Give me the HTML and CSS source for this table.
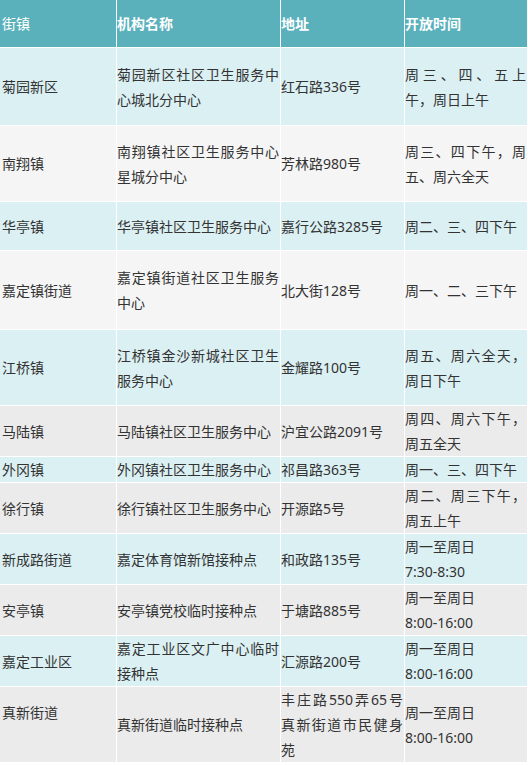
FILE: index.html
```html
<!DOCTYPE html>
<html lang="zh-CN">
<head>
<meta charset="utf-8">
<title>接种点</title>
<link rel="stylesheet" href="styles.css">
</head>
<body>
<table class="sites">
  <colgroup>
    <col class="c1"><col class="c2"><col class="c3"><col class="c4">
  </colgroup>
  <thead>
    <tr class="head">
      <th class="plain">街镇</th>
      <th>机构名称</th>
      <th>地址</th>
      <th>开放时间</th>
    </tr>
  </thead>
  <tbody>
    <tr class="blue h78">
      <td>菊园新区</td>
      <td>菊园新区社区卫生服务中心城北分中心</td>
      <td>红石路336号</td>
      <td>周三、四、五上午，周日上午</td>
    </tr>
    <tr class="light h76">
      <td>南翔镇</td>
      <td>南翔镇社区卫生服务中心星城分中心</td>
      <td>芳林路980号</td>
      <td>周三、四下午，周五、周六全天</td>
    </tr>
    <tr class="blue h49">
      <td>华亭镇</td>
      <td>华亭镇社区卫生服务中心</td>
      <td>嘉行公路3285号</td>
      <td>周二、三、四下午</td>
    </tr>
    <tr class="light h79">
      <td>嘉定镇街道</td>
      <td>嘉定镇街道社区卫生服务中心</td>
      <td>北大街128号</td>
      <td>周一、二、三下午</td>
    </tr>
    <tr class="blue h76">
      <td>江桥镇</td>
      <td>江桥镇金沙新城社区卫生服务中心</td>
      <td>金耀路100号</td>
      <td>周五、周六全天，周日下午</td>
    </tr>
    <tr class="gray">
      <td>马陆镇</td>
      <td>马陆镇社区卫生服务中心</td>
      <td>沪宜公路2091号</td>
      <td>周四、周六下午，周五全天</td>
    </tr>
    <tr class="blue">
      <td>外冈镇</td>
      <td>外冈镇社区卫生服务中心</td>
      <td>祁昌路363号</td>
      <td>周一、三、四下午</td>
    </tr>
    <tr class="gray">
      <td>徐行镇</td>
      <td>徐行镇社区卫生服务中心</td>
      <td>开源路5号</td>
      <td>周二、周三下午，周五上午</td>
    </tr>
    <tr class="blue">
      <td>新成路街道</td>
      <td>嘉定体育馆新馆接种点</td>
      <td>和政路135号</td>
      <td>周一至周日<br>7:30-8:30</td>
    </tr>
    <tr class="gray">
      <td>安亭镇</td>
      <td>安亭镇党校临时接种点</td>
      <td>于塘路885号</td>
      <td>周一至周日<br>8:00-16:00</td>
    </tr>
    <tr class="blue">
      <td>嘉定工业区</td>
      <td>嘉定工业区文广中心临时接种点</td>
      <td>汇源路200号</td>
      <td>周一至周日<br>8:00-16:00</td>
    </tr>
    <tr class="gray">
      <td class="lift">真新街道</td>
      <td>真新街道临时接种点</td>
      <td>丰庄路550弄65号真新街道市民健身苑</td>
      <td>周一至周日<br>8:00-16:00</td>
    </tr>
  </tbody>
</table>
</body>
</html>
```

FILE: styles.css
```css
html, body {
  margin: 0;
  padding: 0;
  background: #ffffff;
}

.sites {
  width: 528px;
  table-layout: fixed;
  border-collapse: separate;
  border-spacing: 0;
  font-family: "Noto Sans", "Noto Sans CJK SC", sans-serif;
  font-size: 14px;
  line-height: 25px;
  color: #333333;
}

.c1 { width: 117px; }
.c2 { width: 164px; }
.c3 { width: 124px; }
.c4 { width: 123px; }

.sites th,
.sites td {
  padding: 0 1px 0 0;
  border-right: 1px solid #ffffff;
  border-bottom: 1px solid #ffffff;
  text-align: justify;
  vertical-align: middle;
  word-break: normal;
}

.sites th:first-child,
.sites td:first-child {
  padding-left: 2px;
}

.head {
  height: 48px;
  background: #5ab1bb;
}

.head th {
  color: #ffffff;
  font-weight: bold;
  text-align: left;
}

.head th.plain {
  font-weight: normal;
}

.blue { background: #dbf0f3; }
.light { background: #f5f5f5; }
.gray { background: #ebebeb; }

.h78 { height: 78px; }
.h76 { height: 76px; }
.h49 { height: 49px; }
.h79 { height: 79px; }

.sites td.lift {
  padding-bottom: 25px;
}
```
